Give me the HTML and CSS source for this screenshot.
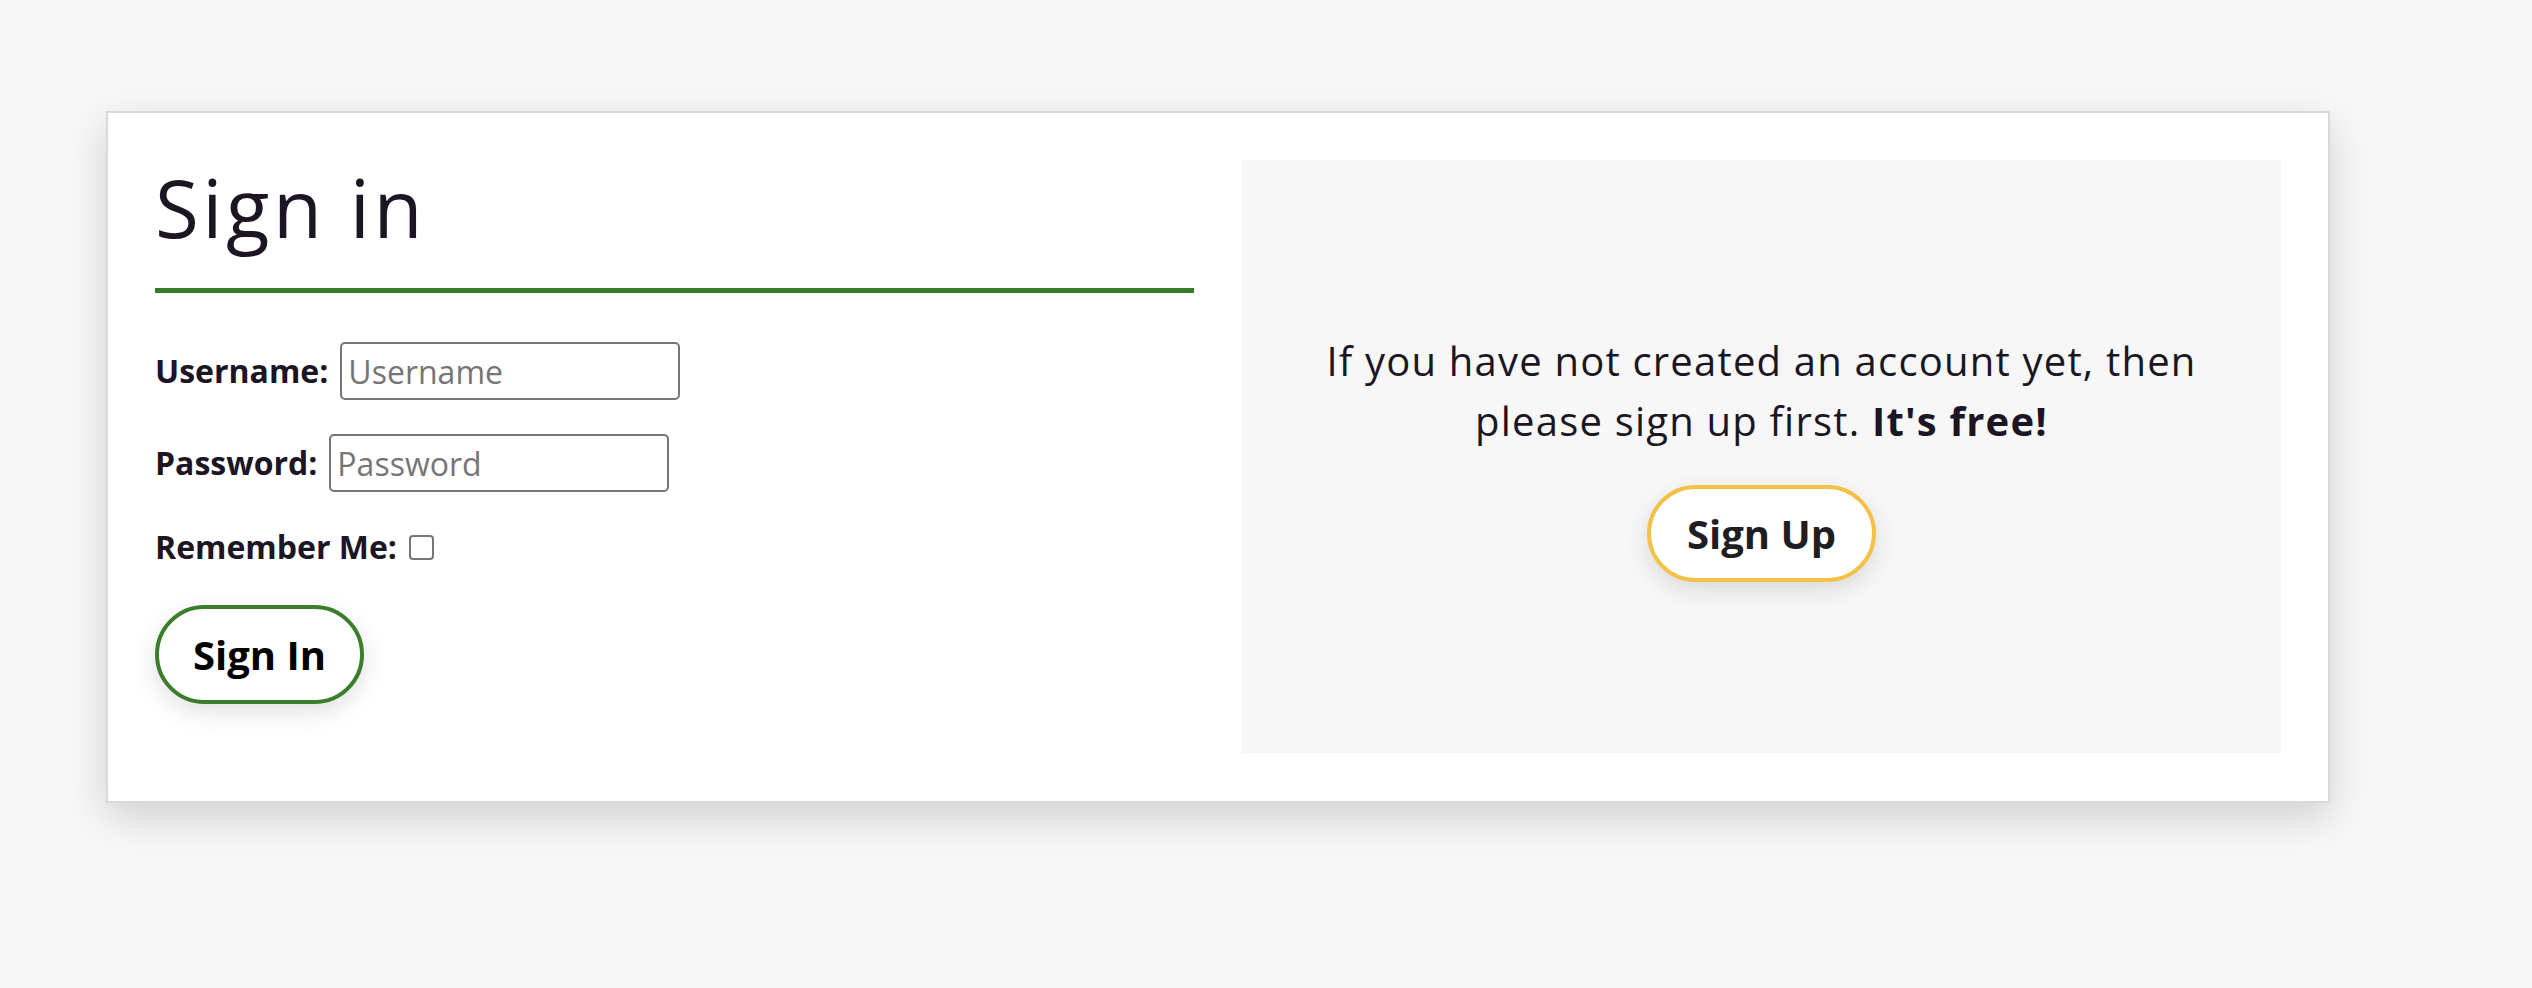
FILE: index.html
```html
<!DOCTYPE html>
<html lang="en">
<head>
<meta charset="utf-8">
<title>Sign in</title>
<link rel="stylesheet" href="styles.css">
</head>
<body>
<main class="card">
  <section class="signin">
    <h1 class="title">Sign in</h1>
    <form class="form">
      <div class="row">
        <label class="label" for="username">Username:</label>
        <input class="field" id="username" type="text" placeholder="Username">
      </div>
      <div class="row">
        <label class="label" for="password">Password:</label>
        <input class="field field-pass" id="password" type="password" placeholder="Password">
      </div>
      <div class="row row-check">
        <label class="label" for="remember">Remember Me:</label>
        <input class="check" id="remember" type="checkbox">
      </div>
      <button class="btn btn-green" type="button">Sign In</button>
    </form>
  </section>
  <section class="signup">
    <p class="note">If you have not created an account yet, then<br>please sign up first. <strong>It's free!</strong></p>
    <button class="btn btn-yellow" type="button">Sign Up</button>
  </section>
</main>
</body>
</html>
```

FILE: styles.css
```css
* { box-sizing: border-box; }

html, body {
  margin: 0;
  padding: 0;
  background: #f7f7f7;
}

body {
  font-family: "Open Sans", "Noto Sans", sans-serif;
  color: #1c1524;
  padding: 111px 0 0 106px;
  min-height: 988px;
}

.card {
  width: 2224px;
  background: #ffffff;
  border: 2px solid #d9d9d9;
  padding: 47px 47px 48px 47px;
  display: grid;
  grid-template-columns: 1fr 1fr;
  column-gap: 48px;
  box-shadow: 0 14px 38px rgba(0, 0, 0, 0.16);
}

.signin {
  display: flex;
  flex-direction: column;
}

.title {
  margin: 0;
  font-size: 80px;
  font-weight: 400;
  line-height: 94px;
  letter-spacing: 3.5px;
  color: #1c1524;
  padding-bottom: 34px;
  border-bottom: 5px solid #367c2b;
}

.form {
  margin-top: 49px;
  display: flex;
  flex-direction: column;
  align-items: flex-start;
  gap: 34px;
}

.row {
  display: flex;
  align-items: center;
  gap: 12px;
}

.label {
  font-size: 32px;
  font-weight: 700;
  color: #1c1524;
  line-height: 48px;
}

.field {
  width: 340px;
  height: 58px;
  border: 2px solid #767676;
  border-radius: 5px;
  padding: 0 6px;
  font-family: inherit;
  font-size: 32px;
  color: #1c1524;
  background: #ffffff;
  outline: none;
}

.field::placeholder {
  color: #757575;
  opacity: 1;
}

.row-check {
  height: 42px;
}

.check {
  appearance: none;
  -webkit-appearance: none;
  width: 25px;
  height: 25px;
  margin: 0;
  border: 2px solid #767676;
  border-radius: 4px;
  background: #ffffff;
}

.btn {
  font-family: inherit;
  font-size: 40px;
  font-weight: 700;
  line-height: 61px;
  padding: 15px 34px;
  border-radius: 999px;
  background: #ffffff;
  box-shadow: 0 8px 24px rgba(0, 0, 0, 0.12);
  cursor: pointer;
}

.btn-green {
  margin-top: 3px;
  border: 4px solid #3a7d2b;
  color: #000000;
}

.btn-yellow {
  border: 4px solid #f3c146;
  color: #1f1f23;
  padding: 14px 36px;
}

.signup {
  background: #f7f7f7;
  min-height: 593px;
  display: flex;
  flex-direction: column;
  align-items: center;
  justify-content: center;
  gap: 34px;
}

.note {
  margin: 0;
  font-size: 40px;
  line-height: 60px;
  letter-spacing: 1.2px;
  text-align: center;
  color: #1c1524;
}

.note strong {
  font-weight: 700;
}
```
